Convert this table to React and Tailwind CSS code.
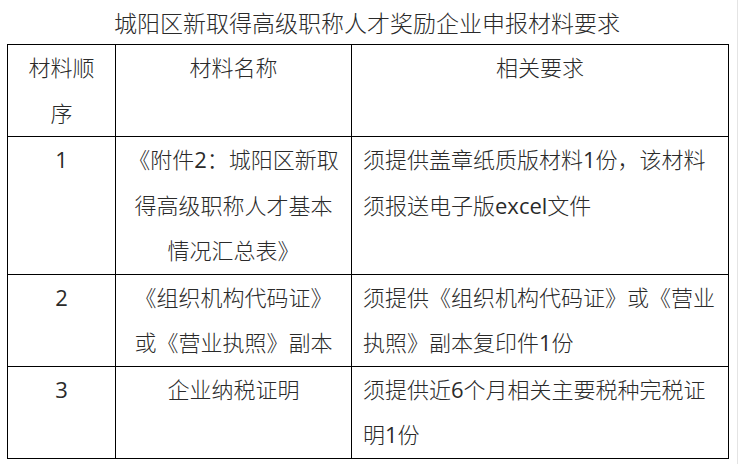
import React from "react";

const rows = [
  {
    no: "1",
    name: ["《附件2：城阳区新取", "得高级职称人才基本", "情况汇总表》"],
    req: ["须提供盖章纸质版材料1份，该材料", "须报送电子版excel文件"],
  },
  {
    no: "2",
    name: ["《组织机构代码证》", "或《营业执照》副本"],
    req: ["须提供《组织机构代码证》或《营业", "执照》副本复印件1份"],
  },
  {
    no: "3",
    name: ["企业纳税证明"],
    req: ["须提供近6个月相关主要税种完税证", "明1份"],
  },
];

// latin runs keep regular weight, cjk stays light
const Txt = ({ s }) =>
  s.split(/([A-Za-z0-9]+)/).map((part, i) =>
    /^[A-Za-z0-9]+$/.test(part) ? (
      <span key={i} className="font-normal">
        {part}
      </span>
    ) : (
      part
    )
  );

const Lines = ({ items }) =>
  items.map((t, i) => (
    <React.Fragment key={i}>
      {i > 0 && <br />}
      <Txt s={t} />
    </React.Fragment>
  ));

export default function App() {
  return (
    <div
      className="relative w-[738px] h-[464px] bg-white text-[#2a2a2a] font-light overflow-hidden"
      style={{ fontFamily: '"Open Sans", "Noto Sans CJK SC", sans-serif' }}
    >
      <div className="w-[734px] h-[44px] text-center text-[23px] leading-[46px]">
        城阳区新取得高级职称人才奖励企业申报材料要求
      </div>

      <table className="ml-[7px] w-[721px] table-fixed border-collapse text-[22px] leading-[45.5px]">
        <colgroup>
          <col className="w-[108px]" />
          <col className="w-[236px]" />
          <col className="w-[377px]" />
        </colgroup>
        <thead>
          <tr>
            <th className="border border-black align-top text-center font-light p-0">
              材料顺
              <br />序
            </th>
            <th className="border border-black align-top text-center font-light p-0">
              材料名称
            </th>
            <th className="border border-black align-top text-center font-light p-0">
              相关要求
            </th>
          </tr>
        </thead>
        <tbody>
          {rows.map((r) => (
            <tr key={r.no}>
              <td className="border border-black align-top text-center p-0">
                <span className="font-normal">{r.no}</span>
              </td>
              <td className="border border-black align-top text-center p-0 whitespace-nowrap">
                <Lines items={r.name} />
              </td>
              <td className="border border-black align-top text-left pl-[11px] pr-0 py-0 whitespace-nowrap">
                <Lines items={r.req} />
              </td>
            </tr>
          ))}
        </tbody>
      </table>

      <div className="absolute right-0 top-0 h-full w-px bg-[#e4e4e4]" />
    </div>
  );
}
